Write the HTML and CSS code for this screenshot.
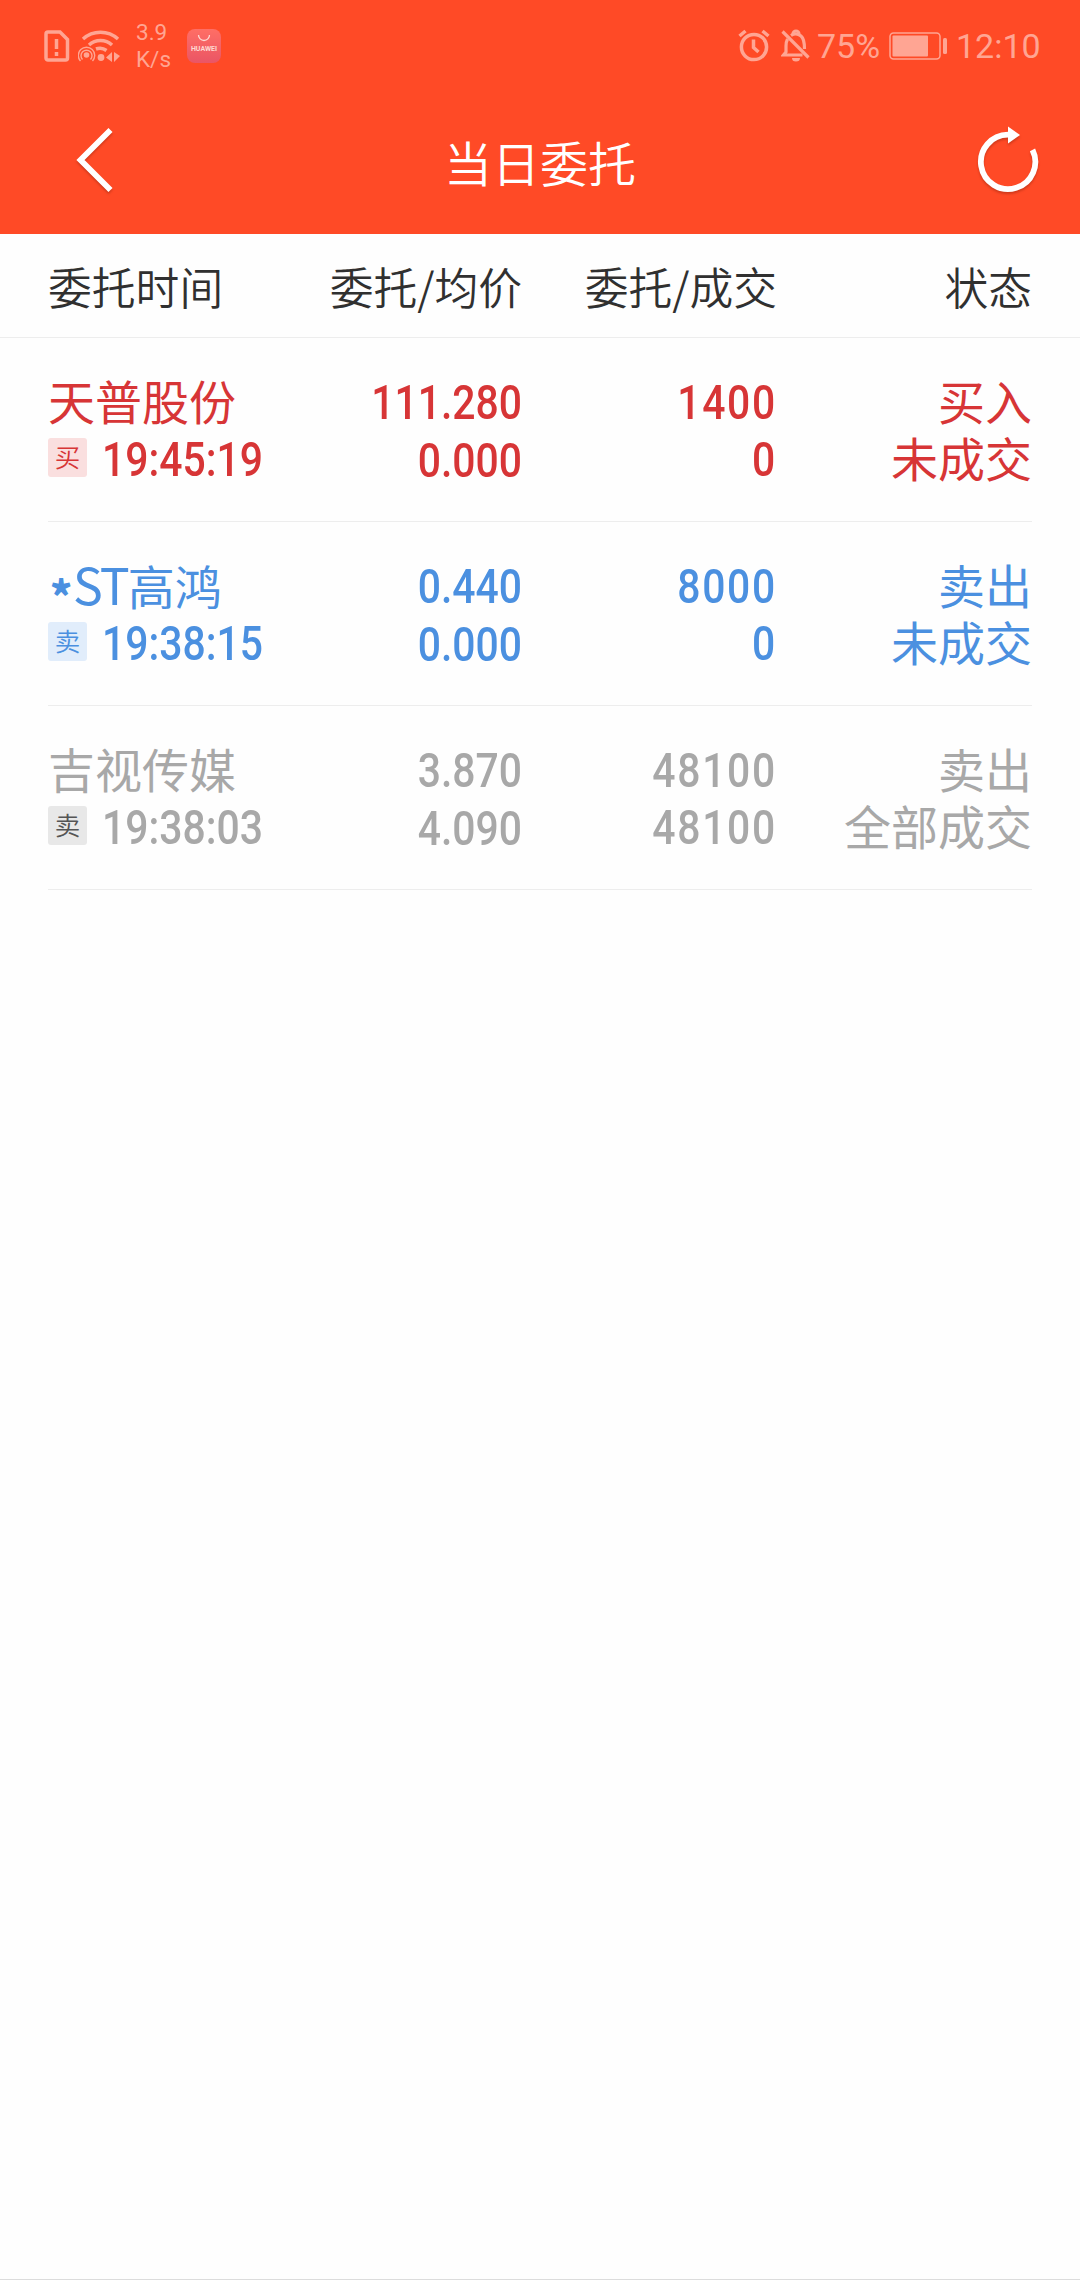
FILE: index.html
```html
<!DOCTYPE html>
<html lang="zh-CN">
  <head>
    <meta charset="UTF-8" />
    <link rel="stylesheet" href="styles.css">
    <title>当日委托</title>
  </head>
  <body>

  <header>
    <div id="statusbar">
      <svg class="sim" width="26" height="32" viewBox="0 0 26 32" fill="none" stroke="currentColor" stroke-width="3.500">
        <path d="M4 2h12l7.500 7.500v18.500a2 2 0 0 1-2 2H4a2 2 0 0 1-2-2V4a2 2 0 0 1 2-2z"/>
        <path d="M12.500 9v10M12.500 22v4"/>
      </svg>
      <svg class="wifi" width="42" height="32" viewBox="0 0 42 32" fill="none" stroke="currentColor" stroke-width="3.500">
        <path d="M5 9a26 26 0 0 1 35 0M11 15a17 17 0 0 1 23 0M18 19a11 11 0 0 1 10.500 1.500"/>
        <circle cx="23" cy="27.500" r="3.400" fill="currentColor" stroke="none"/>
        <circle cx="8.500" cy="25" r="2.800" fill="currentColor" stroke="none"/>
        <path d="M4.500 29.500a5.500 5.500 0 1 1 8 0M2.500 31a8.200 8.200 0 1 1 12 0" stroke-width="1.400"/>
        <path d="M34 22v10l-6-4.500zM36 22v10l6-6z" fill="currentColor" stroke="none"/>
      </svg>
      <div class="speed"><span>3.9</span><span>K/s</span></div>
      <div class="huawei">
        <svg width="14" height="7" viewBox="0 0 14 7" fill="none" stroke="currentColor" stroke-width="1.300"><path d="M1.500 0a5.500 5.500 0 0 0 11 0"/></svg>
        <span>HUAWEI</span>
      </div>
      <svg class="alarm" width="32" height="33" viewBox="0 0 32 33" fill="none" stroke="currentColor" stroke-width="3.500">
        <circle cx="16" cy="18" r="12.600"/>
        <path d="M15.500 10.500v8l5 4.500M1.500 7l6-5M30.500 7l-6-5"/>
      </svg>
      <svg class="bell" width="30" height="33" viewBox="0 0 30 33" fill="none" stroke="currentColor" stroke-width="3.200">
        <path d="M6.500 10c-1 2-1.500 4-1.500 7v6l-2.500 3h19M10 6.500C13 4.500 17 4.500 20 7c3 2.500 3.500 6 3.500 13"/>
        <path d="M12 5a3 3 0 0 1 6 0"/>
        <path d="M1.500 2.500l26 26"/>
        <path d="M11 29h8a4 3.500 0 0 1-8 0z" fill="currentColor" stroke="none"/>
      </svg>
      <span class="percent">75%</span>
      <svg class="battery" width="59" height="28" viewBox="0 0 59 28">
        <rect x="1" y="1" width="50" height="26" rx="3.500" fill="none" stroke="currentColor" stroke-width="1.500"/>
        <rect x="3.500" y="3.500" width="35.500" height="21" rx="1" fill="currentColor"/>
        <rect x="54" y="6" width="4" height="16" rx="1.500" fill="currentColor"/>
      </svg>
      <span class="clock">12:10</span>
    </div>

    <div id="titlebar">
      <svg class="back" width="40" height="66" viewBox="0 0 40 66" fill="none" stroke="#fff" stroke-width="5.800"><path d="M36.500 3L6.500 33L36.500 63"/></svg>
      <h1>当日委托</h1>
      <svg class="refresh" width="64" height="70" viewBox="0 0 64 70">
        <path d="M32 9.700a27.200 27.200 0 1 0 24.500 15.200" fill="none" stroke="#fff" stroke-width="5.800"/>
        <path d="M32 1.500v17l12-8.500z" fill="#fff"/>
      </svg>
    </div>
  </header>

  <div class="row head">
    <span>委托时间</span><span>委托/均价</span><span>委托/成交</span><span>状态</span>
  </div>

  <div id="orders">
    <div class="row order buy">
      <div class="stock">天普股份</div>
      <div class="num">111.280</div>
      <div class="num qty">1400</div>
      <div>买入</div>
      <div class="time"><i>买</i><span>19:45:19</span></div>
      <div class="num avg">0.000</div>
      <div class="num qty">0</div>
      <div>未成交</div>
    </div>
    <div class="row order sell">
      <div class="stock"><span class="star">*</span><span class="latin">ST</span>高鸿</div>
      <div class="num">0.440</div>
      <div class="num qty">8000</div>
      <div>卖出</div>
      <div class="time"><i>卖</i><span>19:38:15</span></div>
      <div class="num avg">0.000</div>
      <div class="num qty">0</div>
      <div>未成交</div>
    </div>
    <div class="row order done">
      <div class="stock">吉视传媒</div>
      <div class="num">3.870</div>
      <div class="num qty">48100</div>
      <div>卖出</div>
      <div class="time"><i>卖</i><span>19:38:03</span></div>
      <div class="num avg">4.090</div>
      <div class="num qty">48100</div>
      <div>全部成交</div>
    </div>
  </div>

  </body>
</html>
```
FILE: styles.css
```css
:root {
  --bar: #ff4a26;
  --bar-icon: #ffa593;
  --line: #ededed;
}
* {
  box-sizing: border-box;
}
html, body {
  margin: 0;
  padding: 0;
}
body {
  height: 2280px;
  overflow: hidden;
  background-color: #fefefe;
  border-bottom: 1px solid #dcdcdc;
  font-family: "Noto Sans CJK SC", sans-serif;
}
svg {
  display: block;
  flex: none;
}

/*========== Top bars ==========*/
header {
  height: 234px;
  background-color: var(--bar);
}
#statusbar {
  display: flex;
  align-items: center;
  height: 91px;
  padding: 0 39px 0 44px;
  color: var(--bar-icon);
  font-family: Roboto, sans-serif;
  font-size: 34px;
}
.wifi {
  margin-left: 8px;
}
.speed {
  display: flex;
  flex-direction: column;
  width: 34px;
  margin-left: 16px;
  font-size: 22.5px;
  line-height: 27px;
}
.huawei {
  display: flex;
  flex-direction: column;
  align-items: center;
  width: 34px;
  height: 34px;
  margin-left: 17px;
  padding-top: 6px;
  border-radius: 8px;
  background: linear-gradient(#ff6e65, #ea5565);
  color: #ffd8d2;
}
.huawei span {
  margin-top: 3px;
  font-size: 7px;
  font-weight: 700;
  line-height: 8px;
}
.alarm {
  margin-left: auto;
}
.bell {
  margin-left: 11px;
}
.percent {
  margin-left: 6px;
  width: 65px;
}
.battery {
  margin-left: 7px;
}
.clock {
  width: 85px;
  margin-left: 8px;
}
#titlebar {
  display: flex;
  align-items: center;
  justify-content: space-between;
  height: 138px;
  padding: 0 40px 0 74px;
}
#titlebar svg {
  filter: drop-shadow(0 2px 1px rgba(120, 30, 10, .35));
}
h1 {
  margin: 1px 10px 0 0;
  color: #fff;
  font-size: 48px;
  font-weight: 350;
  line-height: 60px;
}

/*========== Table ==========*/
.row {
  display: grid;
  grid-template-columns: 220px 254px 255px 255px;
  text-align: right;
  white-space: nowrap;
}
.row > :first-child {
  text-align: left;
}
.head {
  height: 104px;
  padding: 1px 48px 0;
  align-items: center;
  border-bottom: 1px solid var(--line);
  color: #303030;
  font-size: 43.8px;
  font-weight: 350;
}
#orders {
  padding: 0 48px;
}
.order {
  height: 184px;
  padding-top: 33px;
  grid-auto-rows: 57px;
  border-bottom: 1px solid var(--line);
  font-size: 47px;
  font-weight: 400;
  line-height: 57px;
}
.buy {
  color: #d73536;
}
.sell {
  color: #4b90e0;
}
.done {
  color: #a8a8a8;
}

/* narrow digits */
.num, .time span {
  font-family: Roboto, sans-serif;
  font-size: 47.5px;
  font-weight: 500;
  line-height: 65px;
  transform: scaleX(.86);
  transform-origin: right;
}
.num.avg {
  line-height: 67px;
}
.num.qty {
  letter-spacing: 2px;
}
.time {
  display: flex;
  align-items: flex-start;
  text-align: left;
}
.time span {
  margin-left: 15px;
  transform-origin: left;
}
.time i {
  flex: none;
  width: 39px;
  height: 39px;
  margin-top: 10px;
  border-radius: 3px;
  font-size: 25.5px;
  font-style: normal;
  font-weight: 350;
  line-height: 36px;
  text-align: center;
}
.buy i {
  background-color: #fadfdf;
}
.sell i {
  background-color: #e1edfb;
}
.done i {
  background-color: #e8e8e8;
  color: #555;
}
.star {
  display: inline-block;
  width: 25px;
  padding-left: 2px;
  font-size: 42px;
  font-weight: 900;
  line-height: 40px;
  transform: translateY(7px);
}
.latin {
  font-size: 50px;
  letter-spacing: -2px;
}
```
